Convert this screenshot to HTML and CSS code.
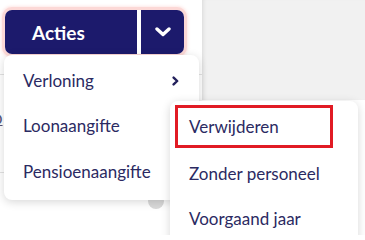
FILE: index.html
```html
<!DOCTYPE html>
<html lang="nl">
<head>
<meta charset="utf-8">
<link rel="stylesheet" href="styles.css">
</head>
<body>
<div class="page">
  <div class="main">
    <div class="toolbar">
      <div class="btn-group">
        <button class="btn btn-main">Acties</button>
        <button class="btn btn-toggle"><svg width="16" height="10" viewBox="0 0 16 10"><path d="M2 2 L8 7.5 L14 2" fill="none" stroke="#fff" stroke-width="3.4" stroke-linecap="round" stroke-linejoin="round"/></svg></button>
      </div>
    </div>
    <div class="table">
      <div class="row row-head"></div>
      <div class="row row-body"><a class="link" href="#">p</a></div>
      <div class="row row-foot"><span class="circle"></span><span class="foot-text">lasthikolanelt</span></div>
    </div>
  </div>
  <div class="side"><div class="side-panel"></div></div>
</div>

<div class="menu">
  <div class="item">Verloning<svg class="caret" width="7" height="10" viewBox="0 0 7 10"><path d="M1.6 1.6 L5.2 5 L1.6 8.4" fill="none" stroke="#23215c" stroke-width="2.4" stroke-linecap="round" stroke-linejoin="round"/></svg></div>
  <div class="item">Loonaangifte</div>
  <div class="item">Pensioenaangifte</div>
</div>

<div class="submenu">
  <div class="item highlight">Verwijderen</div>
  <div class="item">Zonder personeel</div>
  <div class="item">Voorgaand jaar</div>
</div>
</body>
</html>
```
FILE: styles.css
```css
html, body {
  margin: 0;
  padding: 0;
}
body {
  width: 365px;
  height: 235px;
  overflow: hidden;
  position: relative;
  background: #ffffff;
  font-family: Lato, "Noto Sans", sans-serif;
}
.page {
  display: flex;
  height: 235px;
}
.main {
  width: 202px;
  flex: none;
}
.side {
  flex: 1;
}
.side-panel {
  height: 100px;
  background: #f1f1f1;
  box-shadow: inset 4px 0 4px -3px rgba(0, 0, 0, 0.10);
}
.toolbar {
  padding: 10px 0 0 5px;
}
.btn-group {
  display: flex;
  width: 179px;
  height: 44px;
  border-radius: 7px;
  box-shadow: 0 0 0 3px #fcd8d6, 0 0 3px 4px rgba(252, 200, 196, 0.45);
  overflow: hidden;
  gap: 4px;
  background: #ffffff;
}
.btn {
  border: 0;
  margin: 0;
  padding: 0;
  background: #1c1a6c;
  color: #ffffff;
  font-family: Lato, "Noto Sans", sans-serif;
  display: flex;
  align-items: center;
  justify-content: center;
}
.btn-main {
  width: 132px;
  font-size: 19px;
  font-weight: 700;
  justify-content: flex-start;
  padding-left: 27px;
}
.btn-toggle {
  flex: 1;
}
.row {
  border-bottom: 1px solid #e2e2e2;
}
.row-head {
  height: 20px;
}
.row-body {
  height: 97px;
  display: flex;
  align-items: center;
}
.link {
  color: #55557a;
  font-size: 17px;
  margin-left: -7px;
  margin-top: -12px;
}
.row-foot {
  border-bottom: 0;
  position: relative;
  height: 61px;
}
.circle {
  position: absolute;
  left: 148px;
  top: 20px;
  width: 16px;
  height: 16px;
  border-radius: 50%;
  background: #d9d9d9;
}
.foot-text {
  position: absolute;
  left: 40px;
  top: 60px;
  color: #555;
  font-size: 15px;
  letter-spacing: 4px;
}
.menu,
.submenu {
  position: absolute;
  background: #ffffff;
  border-radius: 8px;
  box-shadow: 0 2px 10px rgba(0, 0, 0, 0.16);
  color: #2b2a62;
  font-size: 17px;
}
.menu {
  left: 4px;
  top: 55px;
  width: 195px;
  height: 145px;
  padding-top: 2.6px;
  box-sizing: border-box;
}
.submenu {
  left: 170px;
  top: 101px;
  width: 188px;
  height: 160px;
  padding-top: 4px;
  box-sizing: border-box;
}
.item {
  height: 45.5px;
  display: flex;
  align-items: center;
  justify-content: space-between;
  padding: 0 20px 0 19px;
}
.caret {
  display: block;
  margin-top: 1px;
}
.submenu .highlight {
  height: 43px;
  box-sizing: border-box;
  margin: 0 25px 2.5px 5px;
  border: 3px solid #e11b24;
  padding-left: 11px;
}
```
